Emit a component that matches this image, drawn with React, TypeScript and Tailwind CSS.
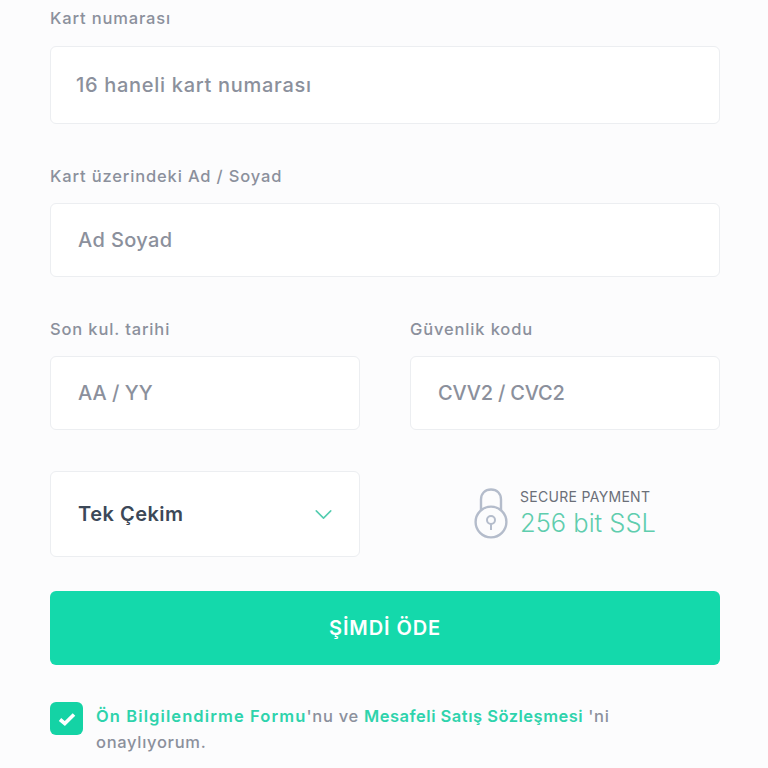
import { ChevronDown } from "lucide-react";

const fieldClass =
  "flex w-full items-center rounded-md border border-[#eceef1] bg-white text-[20px] font-medium text-[#8b909c]";

function Label({ children }: { children: string }) {
  return (
    <p className="h-[20px] text-[16.5px] leading-[20px] font-medium tracking-[0.85px] text-[#8b909c]">
      {children}
    </p>
  );
}

function LockIcon() {
  return (
    <svg width="34" height="52" viewBox="0 0 34 52" fill="none" stroke="#b4bccb" strokeWidth="2.4">
      <path d="M7 22V11.5C7 5.5 11 1.5 17 1.5S27 5.5 27 11.5V22" />
      <circle cx="17" cy="34" r="15.4" />
      <circle cx="17" cy="32" r="4" strokeWidth="2" />
      <path d="M17 36V42" strokeWidth="2" />
    </svg>
  );
}

export default function App() {
  return (
    <div className="h-[768px] w-[768px] overflow-hidden bg-[#fcfcfd] px-[50px] pr-[48px] pt-[8px] font-['Inter',sans-serif]">
      <Label>Kart numarası</Label>
      <div className={`${fieldClass} mt-[18px] h-[78px] pl-[25px] tracking-[0.7px]`}>16 haneli kart numarası</div>

      <div className="mt-[42px]">
        <Label>Kart üzerindeki Ad / Soyad</Label>
      </div>
      <div className={`${fieldClass} mt-[17px] h-[74px] pl-[27px] tracking-[0.4px]`}>Ad Soyad</div>

      <div className="mt-[42px] grid grid-cols-[310px_310px] gap-x-[50px]">
        <div>
          <Label>Son kul. tarihi</Label>
          <div className={`${fieldClass} mt-[17px] h-[74px] pl-[27px]`}>AA / YY</div>
        </div>
        <div>
          <Label>Güvenlik kodu</Label>
          <div className={`${fieldClass} mt-[17px] h-[74px] pl-[27px] tracking-[-0.2px]`}>CVV2 / CVC2</div>
        </div>
      </div>

      <div className="mt-[41px] grid grid-cols-[310px_310px] gap-x-[50px]">
        <div className="flex h-[86px] items-center justify-between rounded-md border border-[#eceef1] bg-white pl-[27px] pr-[21px]">
          <span className="text-[20px] font-semibold tracking-[0.5px] text-[#3c4858]">Tek Çekim</span>
          <ChevronDown className="h-[29px] w-[29px] text-[#54cdb0]" strokeWidth={1.3} />
        </div>
        <div className="flex items-center pl-[64px]">
          <LockIcon />
          <div className="ml-[12px]">
            <p className="-mt-[2px] text-[14px] leading-[18px] tracking-[0.3px] text-[#6b6f78]">SECURE PAYMENT</p>
            <p className="mt-[2px] text-[25.5px] leading-[30px] font-light text-[#5fcdae]">256 bit SSL</p>
          </div>
        </div>
      </div>

      <button className="mt-[34px] flex h-[74px] w-full items-center justify-center rounded-md bg-[#14d9ab] text-[20px] font-semibold tracking-[0.9px] text-white">
        ŞİMDİ ÖDE
      </button>

      <div className="mt-[37px] flex">
        <div className="flex h-[33px] w-[33px] shrink-0 items-center justify-center rounded-md bg-[#14d3a5]">
          <svg width="18" height="14" viewBox="0 0 18 14" fill="none" stroke="white" strokeWidth="3.6">
            <path d="M2 7.5L6.8 11.5L16 2.5" />
          </svg>
        </div>
        <p className="ml-[13px] mt-[1px] text-[16.5px] leading-[26px] font-medium tracking-[0.7px] text-[#8b909c]">
          <span className="font-semibold tracking-[1.1px] text-[#2ed3ac]">Ön Bilgilendirme Formu</span>'nu ve{" "}
          <span className="font-semibold tracking-[0.5px] text-[#2ed3ac]">Mesafeli Satış Sözleşmesi</span> 'ni
          <br />
          onaylıyorum.
        </p>
      </div>
    </div>
  );
}
